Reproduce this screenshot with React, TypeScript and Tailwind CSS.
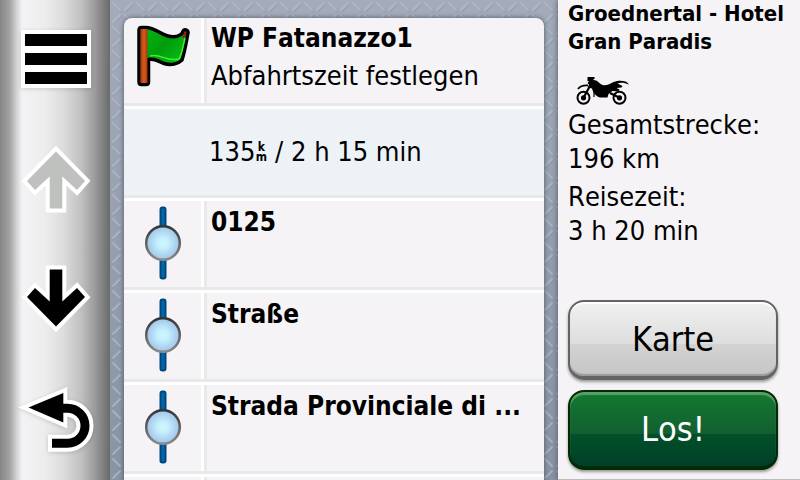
import React from "react";

interface RouteStop {
  id: string;
  name: string;
}

const stops: RouteStop[] = [
  { id: "stop-1", name: "0125" },
  { id: "stop-2", name: "Straße" },
  { id: "stop-3", name: "Strada Provinciale di ..." },
];

function MenuIcon() {
  return (
    <svg width="72" height="61" viewBox="0 -1 72 61" className="drop-shadow-sm" aria-hidden="true">
      <rect x="1" y="1" width="70" height="58" fill="#fff" />
      <path d="M5 5h62v12H5zM5 24h62v12H5zM5 43h62v12H5z" fill="#000" />
    </svg>
  );
}

function ArrowIcon({ down, muted }: { down?: boolean; muted?: boolean }) {
  return (
    <svg
      width="72"
      height="68"
      viewBox="0 0 72 68"
      className={down ? "rotate-180" : ""}
      aria-hidden="true"
    >
      <path
        d="M36 6.500 65 36 57 45 42.300 31.500V63.500H29.700V31.500L15 45 7 36Z"
        fill={muted ? "#bfc1bf" : "#000"}
        stroke="#fff"
        strokeWidth="8"
        paintOrder="stroke"
      />
    </svg>
  );
}

function BackIcon() {
  return (
    <svg width="78" height="68" viewBox="0 0 78 68" className="drop-shadow-sm" aria-hidden="true">
      <path d="M44 23.200h6.500a17.500 17.500 0 0 1 0 35H31" fill="none" stroke="#fff" strokeWidth="17" />
      <path d="M11.500 22.500 46.300 8v29.500Z" fill="#fff" stroke="#fff" strokeWidth="8" strokeMiterlimit="8" />
      <path d="M44 23.200h6.500a17.500 17.500 0 0 1 0 35H35" fill="none" stroke="#000" strokeWidth="9" />
      <path d="M11.500 22.500 46.300 8v29.500Z" fill="#000" />
    </svg>
  );
}

function FlagIcon() {
  return (
    <svg width="54" height="65" viewBox="0 1 54 65" aria-hidden="true">
      <defs>
        <linearGradient id="flag-green" x1="0" y1="0" x2="1" y2="1">
          <stop offset="0" stopColor="#00c010" />
          <stop offset="0.4" stopColor="#009c0c" />
          <stop offset="1" stopColor="#10d41c" />
        </linearGradient>
        <linearGradient id="flag-pole" x1="0" y1="0" x2="1" y2="0">
          <stop offset="0" stopColor="#a8360c" />
          <stop offset="0.5" stopColor="#dc5a1c" />
          <stop offset="1" stopColor="#a8360c" />
        </linearGradient>
      </defs>
      <path
        d="M3 8Q3 5.500 6 5.500L8 5.500C14 5 18 7 24 10.500C31 14.500 39 16 44 13C47 11.500 46.500 9.500 47.500 8.500C49 7 52.500 8 52 11C50.500 18 49.500 27 46 38C42 42 35 43.500 28 41.500C22 39.500 19 36 12.500 37.500V60Q12.500 62.500 10 62.500H5.500Q3 62.500 3 60Z"
        fill="url(#flag-green)"
        stroke="#000"
        strokeWidth="3.500"
        strokeLinejoin="round"
      />
      <path d="M14 34c11-3 15 6 29 3 3-5 4-13 6-21" fill="none" stroke="#3df02c" strokeWidth="1.500" />
      <rect x="4.500" y="7" width="7" height="54" fill="url(#flag-pole)" />
      <path d="M48 10q3-2 2 2l-2 4-2-1q2-2 2-5Z" fill="#a31515" />
    </svg>
  );
}

function ViaPointIcon() {
  return (
    <svg width="38" height="74" viewBox="0 0 38 74" aria-hidden="true">
      <defs>
        <radialGradient id="via-fill">
          <stop offset="0" stopColor="#ccf8ff" />
          <stop offset="0.3" stopColor="#c6f1fd" />
          <stop offset="1" stopColor="#a0c3ea" />
        </radialGradient>
        <linearGradient id="via-ring" x1="0" y1="0" x2="0" y2="1">
          <stop offset="0" stopColor="#353535" />
          <stop offset="1" stopColor="#8a8a8a" />
        </linearGradient>
      </defs>
      <rect x="16.500" y="1.500" width="5" height="71" rx="2" fill="#0067ab" stroke="#00487c" strokeWidth="2" />
      <circle cx="19" cy="37" r="16.800" fill="url(#via-fill)" stroke="url(#via-ring)" strokeWidth="2.500" />
    </svg>
  );
}

function MotorcycleIcon() {
  return (
    <svg width="56" height="30" viewBox="0 0 56 30" role="img" aria-label="Motorrad">
      <g fill="none" stroke="#000">
        <circle cx="7.500" cy="21.800" r="6" strokeWidth="2" />
        <circle cx="43.500" cy="21.800" r="6" strokeWidth="2" />
        <path d="M7.500 21.800 15 8" strokeWidth="2.200" />
        <path d="M2 13q3-4 10-3.500" strokeWidth="1.800" />
        <path d="M43.500 21.800 34 17" strokeWidth="2.200" />
        <path d="M18 14v7" strokeWidth="1.200" />
      </g>
      <circle cx="7.500" cy="21.800" r="2.600" />
      <circle cx="43.500" cy="21.800" r="2.600" />
      <path d="M11.500 1h7v2h-1v1c4 0 5 3 9 5 4 1 7-1 11-3 5-2 9-1.500 12-.5 2 1 3 2 3 3-4-2-8-2-11-1l5 2.500-1 1.500-5 .5 3 1.500-1 2-6-.5-4 3-1 3.500H24c-4-1-7-5-8-9l-4-1 1-3-1.500-1.500 1.500-2h-1.500Z" />
    </svg>
  );
}

function TreadPlate() {
  return (
    <svg className="absolute inset-0 h-full w-full" aria-hidden="true">
      <defs>
        <pattern id="tread" width="24" height="24" patternUnits="userSpaceOnUse">
          <g strokeWidth="3" strokeLinecap="round">
            <path d="M3 3l7 7M15 15l7 7M15 10l7-7M3 22l7-7" stroke="#8993a5" strokeOpacity="0.35" transform="translate(1 1)" />
            <path d="M3 3l7 7M15 15l7 7M15 10l7-7M3 22l7-7" stroke="#b4c3d8" strokeOpacity="0.6" strokeWidth="2" />
          </g>
        </pattern>
      </defs>
      <rect width="100%" height="100%" fill="url(#tread)" />
    </svg>
  );
}

function Sidebar() {
  return (
    <nav className="flex w-[110px] shrink-0 flex-col items-center bg-[linear-gradient(to_right,#858585,#a4a4a5_9%,#d2d2d3_15%,#f3f3f6_20%,#ededee_40%,#dcdcdc_58%,#c0c0c0_74%,#9c9c9c_86%,#6a6a6a)] pt-7 pl-0.5">
      <button type="button" aria-label="Menü">
        <MenuIcon />
      </button>
      <button type="button" aria-label="Nach oben" disabled className="mt-14">
        <ArrowIcon muted />
      </button>
      <button type="button" aria-label="Nach unten" className="mt-13">
        <ArrowIcon down />
      </button>
      <button type="button" aria-label="Zurück" className="mt-13">
        <BackIcon />
      </button>
    </nav>
  );
}

function StopRow({ icon, children }: { icon?: React.ReactNode; children?: React.ReactNode }) {
  return (
    <li className="flex h-[92px] border-t-3 border-b-3 border-t-white border-b-[#e7e9e8] first:h-[88px] first:border-t-0">
      <div className="flex w-20 shrink-0 justify-center border-r-3 border-white pt-[5px]">{icon}</div>
      <div className="min-w-0 flex-1 border-l-3 border-[#e9ebea] pt-[5px] pl-1">{children}</div>
    </li>
  );
}

export default function App() {
  return (
    <div className="flex h-screen overflow-hidden bg-[#f5f3f5] font-['DejaVu_Sans_Condensed','DejaVu_Sans',sans-serif] text-black [font-kerning:none]">
      <Sidebar />

      <main className="relative min-w-0 flex-1 overflow-hidden bg-linear-to-b from-[#a5abb8] to-[#8993a2] px-3.5 pt-[18px]">
        <TreadPlate />
        <ul className="relative overflow-hidden rounded-t-lg bg-[#f5f3f5] shadow-[0_0_5px_#4b5563]">
          <StopRow icon={<FlagIcon />}>
            <h1 className="truncate text-[26px] leading-[30px] font-bold">WP Fatanazzo1</h1>
            <p className="mt-1 truncate text-[27px] leading-[38px]">Abfahrtszeit festlegen</p>
          </StopRow>
          <li className="flex h-[92px] items-center border-t-3 border-b-3 border-t-white border-b-[#e7e9e8] bg-[#edf2f6] pl-[85px] text-[27px]">
            <span>135</span>
            <span className="w-3 text-center text-xs leading-[10px] font-bold break-all">km</span>
            <span className="whitespace-pre"> / 2 h 15 min</span>
          </li>
          {stops.map((stop) => (
            <StopRow key={stop.id} icon={<ViaPointIcon />}>
              <h2 className="truncate text-[26px] leading-8 font-bold">{stop.name}</h2>
            </StopRow>
          ))}
          <StopRow />
        </ul>
      </main>

      <aside className="relative flex w-[242px] shrink-0 flex-col border-b border-[#bdbdbd] bg-[#f5f3f5] px-2.5 pb-[9px] shadow-[0_0_6px_#4b5563]">
        <h2 className="text-[22px] leading-7 font-bold">Groednertal - Hotel Gran Paradis</h2>
        <div className="mt-5 pl-2">
          <MotorcycleIcon />
        </div>
        <dl className="mt-0.5 text-[27px] leading-[34px]">
          <dt>Gesamtstrecke:</dt>
          <dd>196 km</dd>
          <dt className="mt-1">Reisezeit:</dt>
          <dd>3 h 20 min</dd>
        </dl>
        <div className="mt-auto flex flex-col gap-2.5 pr-3">
          <button
            type="button"
            className="h-20 rounded-2xl border-2 border-b-4 border-[#646464] bg-[linear-gradient(#f0f0f0,#dedede_56%,#d3d3d3_57%,#c5c5c5)] text-[34px] shadow-[inset_0_2px_1px_#fff,inset_0_-2px_1px_#9a9a9a,0_2px_3px_#999]"
          >
            Karte
          </button>
          <button
            type="button"
            className="h-20 rounded-2xl border-2 border-b-4 border-[#022b05] bg-[linear-gradient(#117a30,#135f30_56%,#02502a_57%,#004028)] text-[34px] text-white shadow-[inset_0_3px_1px_#5f9e6a,0_2px_3px_#999]"
          >
            Los!
          </button>
        </div>
      </aside>
    </div>
  );
}
